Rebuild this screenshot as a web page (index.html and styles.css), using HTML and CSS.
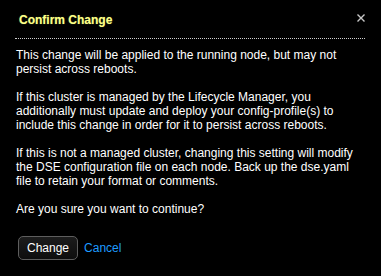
FILE: index.html
```html
<!DOCTYPE html>
<html>
<head>
<meta charset="utf-8">
<link rel="stylesheet" href="styles.css">
</head>
<body>
<div class="modal">
  <div class="modal-header">
    <h3 class="modal-title">Confirm Change</h3>
    <svg class="close" width="8" height="8" viewBox="0 0 8 8"><path d="M0.5 0.5 L7.5 7.5 M7.5 0.5 L0.5 7.5" stroke="#c8c8c8" stroke-width="1.4" fill="none"/></svg>
  </div>
  <div class="modal-body">
    <p>This change will be applied to the running node, but may not persist across reboots.</p>
    <p>If this cluster is managed by the Lifecycle Manager, you additionally must update and deploy your config-profile(s) to include this change in order for it to persist across reboots.</p>
    <p>If this is not a managed cluster, changing this setting will modify the DSE configuration file on each node. Back up the dse.yaml file to retain your format or comments.</p>
    <p>Are you sure you want to continue?</p>
  </div>
  <div class="modal-footer">
    <button class="btn">Change</button>
    <a class="link">Cancel</a>
  </div>
</div>
</body>
</html>
```
FILE: styles.css
```css
html, body {
  margin: 0;
  padding: 0;
  background: #000;
}
body {
  width: 381px;
  height: 276px;
  overflow: hidden;
  font-family: "Liberation Sans", Arial, Helvetica, sans-serif;
  font-size: 12px;
  line-height: 14px;
  color: #fff;
}
.modal-header {
  margin: 0 16px 0 15px;
  padding: 13px 0 11px 4px;
  border-bottom: 1px dotted #cfcfcf;
  display: flex;
  justify-content: space-between;
  align-items: flex-start;
}
.modal-title {
  margin: 0;
  font-size: 12px;
  line-height: 14px;
  font-weight: bold;
  color: #ffff86;
  text-shadow: 0 0 1px rgba(200, 255, 120, 0.5);
}
.close {
  display: block;
  margin-top: 1px;
}
.modal-body {
  padding: 9px 15px 0 16px;
}
.modal-body p {
  margin: 0 0 14px;
}
.modal-body p:last-child {
  margin-bottom: 0;
}
.modal-footer {
  margin-top: 20px;
  padding-left: 18px;
  display: flex;
  align-items: center;
  gap: 6px;
}
.btn {
  font-family: "Liberation Sans", Arial, Helvetica, sans-serif;
  font-size: 12px;
  line-height: 22px;
  height: 24px;
  padding: 0 8px;
  color: #fff;
  background: linear-gradient(#1c1c1c, #0e0e0e);
  border: 1px solid #5e5e5e;
  border-radius: 5px;
  box-sizing: border-box;
}
.link {
  color: #1e9bff;
  font-size: 12px;
  line-height: 14px;
}
```
